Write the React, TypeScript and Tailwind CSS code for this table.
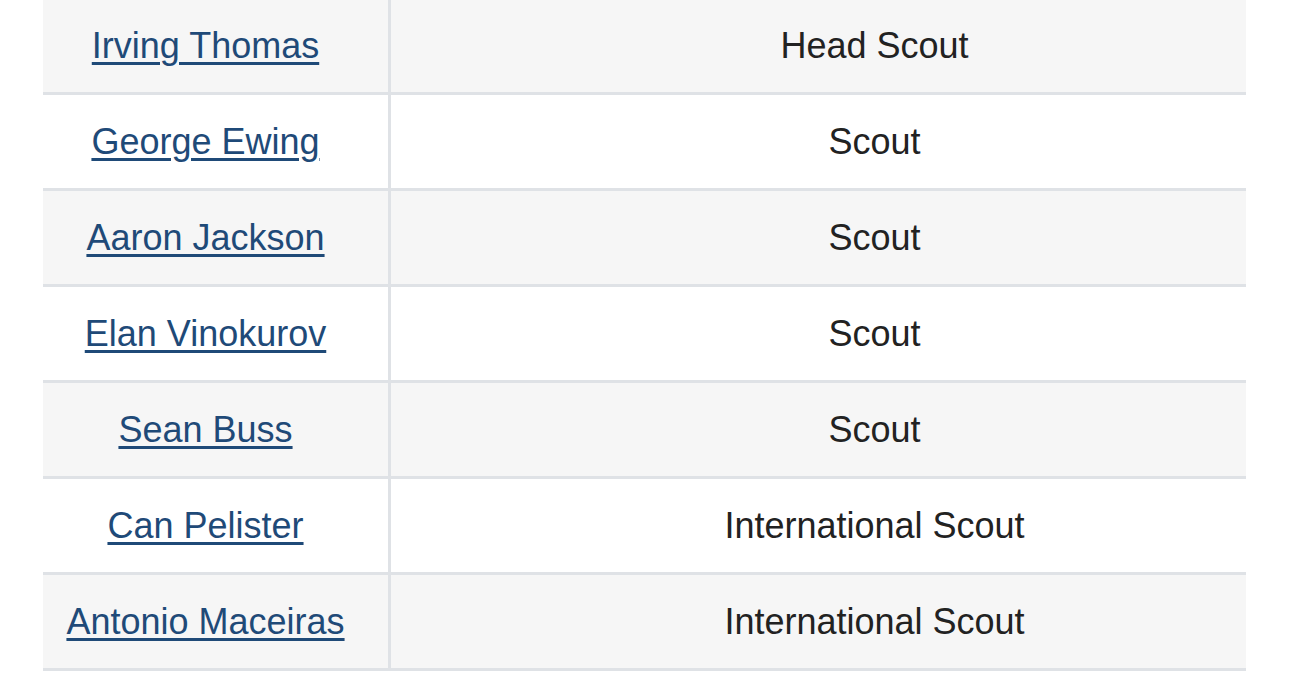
const staff = [
  { name: 'Irving Thomas', role: 'Head Scout' },
  { name: 'George Ewing', role: 'Scout' },
  { name: 'Aaron Jackson', role: 'Scout' },
  { name: 'Elan Vinokurov', role: 'Scout' },
  { name: 'Sean Buss', role: 'Scout' },
  { name: 'Can Pelister', role: 'International Scout' },
  { name: 'Antonio Maceiras', role: 'International Scout' },
];

export default function App() {
  return (
    <div
      className="min-h-screen bg-white overflow-hidden"
      style={{ fontFamily: '"Liberation Sans", Arial, sans-serif' }}
    >
      <div className="ml-[43px] w-[1203px] -mt-px">
        {staff.map((row, i) => (
          <div
            key={row.name}
            className={`flex h-[96px] border-b-[3px] border-[#dfe2e6] ${
              i % 2 === 0 ? 'bg-[#f6f6f6]' : 'bg-white'
            }`}
          >
            {/* name column */}
            <div className="w-[348px] flex items-center justify-center pr-[20px] border-r-[3px] border-[#dfe2e6]">
              <a
                href="#"
                className="text-[36px] leading-none text-[#1f4a78] underline decoration-[3px] underline-offset-[4px]"
              >
                {row.name}
              </a>
            </div>
            {/* role column */}
            <div className="flex-1 flex items-center justify-center pl-[112px] text-[36px] leading-none text-[#222]">
              {row.role}
            </div>
          </div>
        ))}
      </div>
    </div>
  );
}
